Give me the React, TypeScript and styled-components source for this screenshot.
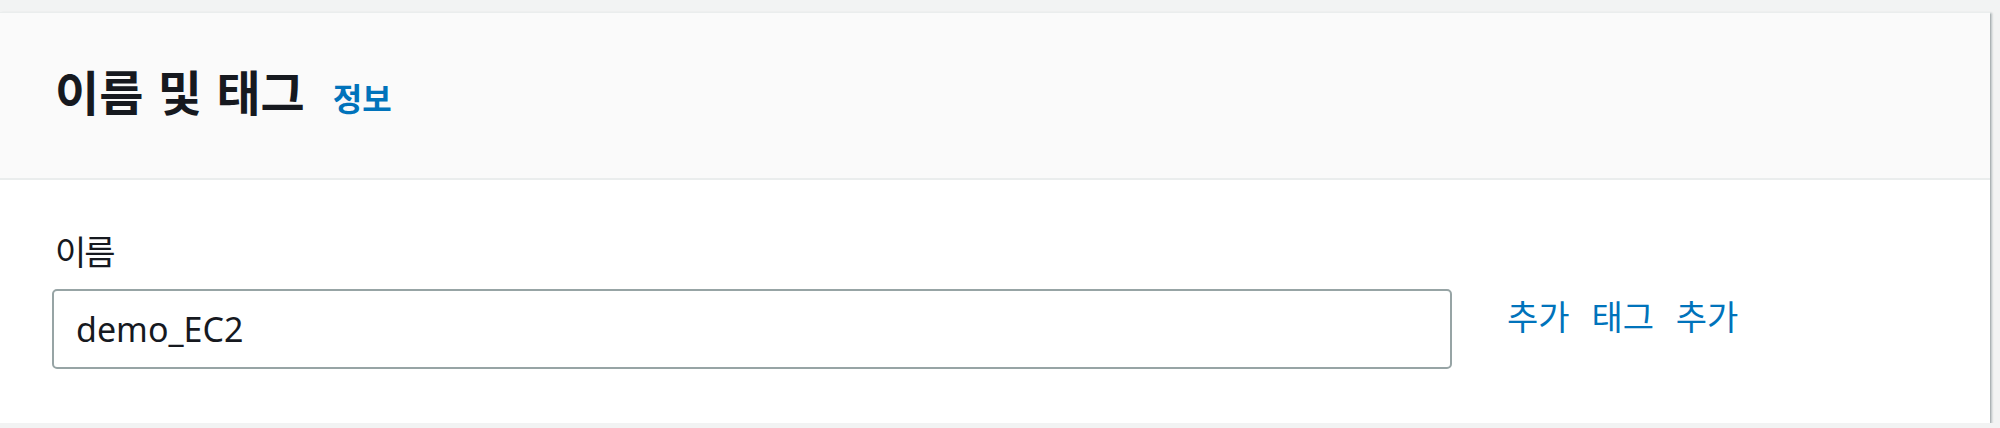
import styled, { createGlobalStyle } from "styled-components";

const GlobalStyle = createGlobalStyle`
  body {
    margin: 0;
    background-color: #f2f3f3;
    font-family: "Noto Sans", "Noto Sans CJK KR", sans-serif;
    color: #16191f;
  }
`;

const Page = styled.div`
  padding: 12px 10px 0 0;
`;

const Card = styled.section`
  background-color: #ffffff;
  border-top: 1px solid #eaeded;
  box-shadow: 0 2px 1px 0 rgba(0, 28, 36, 0.45),
    2px 1px 2px 0 rgba(0, 28, 36, 0.25);
`;

const Header = styled.div`
  display: flex;
  align-items: baseline;
  gap: 28px;
  height: 167px;
  box-sizing: border-box;
  padding: 52px 0 0 55px;
  background-color: #fafafa;
  border-bottom: 2px solid #eaeded;
`;

const Title = styled.h2`
  margin: 0;
  font-size: 48px;
  font-weight: 700;
  letter-spacing: 0;
  word-spacing: 2px;
  line-height: 56px;
`;

const InfoLink = styled.a`
  font-size: 32px;
  font-weight: 700;
  color: #0073bb;
  text-decoration: none;
  cursor: pointer;
`;

const Body = styled.div`
  padding: 50px 0 54px 52px;
`;

const Label = styled.label`
  display: block;
  margin-left: 3px;
  font-size: 34px;
  letter-spacing: -2px;
  line-height: 44px;
  margin-bottom: 15px;
`;

const Row = styled.div`
  display: flex;
  align-items: flex-start;
  gap: 55px;
`;

const TextInput = styled.input`
  width: 1400px;
  height: 80px;
  box-sizing: border-box;
  padding: 0 22px;
  border: 2px solid #97a4a5;
  border-radius: 5px;
  background-color: #ffffff;
  font-family: "Noto Sans", "Noto Sans CJK KR", sans-serif;
  font-size: 34px;
  color: #16191f;
  outline: none;
`;

const AddLink = styled.a`
  margin-top: 6px;
  font-size: 34px;
  letter-spacing: 0;
  word-spacing: 13px;
  line-height: 44px;
  color: #0073bb;
  text-decoration: none;
  cursor: pointer;
`;

export default function App() {
  return (
    <>
      <GlobalStyle />
      <Page>
        <Card>
          <Header>
            <Title>이름 및 태그</Title>
            <InfoLink>정보</InfoLink>
          </Header>
          <Body>
            <Label htmlFor="name">이름</Label>
            <Row>
              <TextInput id="name" defaultValue="demo_EC2" />
              <AddLink>추가 태그 추가</AddLink>
            </Row>
          </Body>
        </Card>
      </Page>
    </>
  );
}
